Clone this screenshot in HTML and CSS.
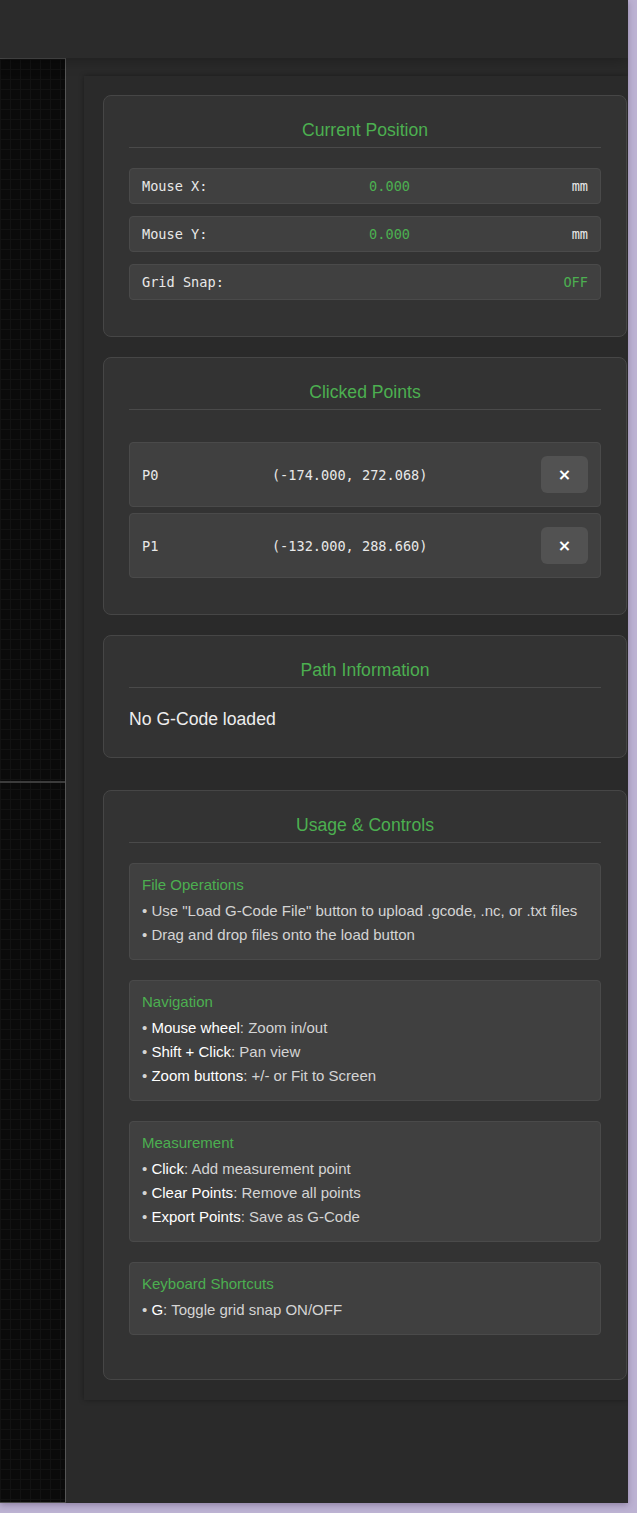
FILE: index.html
```html
<!DOCTYPE html>
<html lang="en">
<head>
<meta charset="utf-8">
<title>G-Code Viewer</title>
<link rel="stylesheet" href="styles.css">
</head>
<body>
<div class="app">
  <header class="topbar"></header>
  <div class="main">
    <div class="canvas-area">
      <div class="axis-x"></div>
    </div>
    <aside class="sidebar">
      <div class="panel">
        <section class="card">
          <h3 class="card-title">Current Position</h3>
          <div class="info-row"><span class="lbl">Mouse X:</span><span class="val">0.000</span><span class="unit">mm</span></div>
          <div class="info-row"><span class="lbl">Mouse Y:</span><span class="val">0.000</span><span class="unit">mm</span></div>
          <div class="info-row"><span class="lbl">Grid Snap:</span><span class="val">OFF</span></div>
        </section>

        <section class="card">
          <h3 class="card-title">Clicked Points</h3>
          <div class="points">
            <div class="point"><span class="pname">P0</span><span class="pcoord">(-174.000, 272.068)</span><button class="del">×</button></div>
            <div class="point"><span class="pname">P1</span><span class="pcoord">(-132.000, 288.660)</span><button class="del">×</button></div>
          </div>
        </section>

        <section class="card">
          <h3 class="card-title">Path Information</h3>
          <p class="path-info">No G-Code loaded</p>
        </section>

        <section class="card card-usage">
          <h3 class="card-title">Usage &amp; Controls</h3>
          <div class="help">
            <div class="help-title">File Operations</div>
            <div class="help-item">• Use "Load G-Code File" button to upload .gcode, .nc, or .txt files</div>
            <div class="help-item">• Drag and drop files onto the load button</div>
          </div>
          <div class="help">
            <div class="help-title">Navigation</div>
            <div class="help-item">• <b>Mouse wheel</b>: Zoom in/out</div>
            <div class="help-item">• <b>Shift + Click</b>: Pan view</div>
            <div class="help-item">• <b>Zoom buttons</b>: +/- or Fit to Screen</div>
          </div>
          <div class="help">
            <div class="help-title">Measurement</div>
            <div class="help-item">• <b>Click</b>: Add measurement point</div>
            <div class="help-item">• <b>Clear Points</b>: Remove all points</div>
            <div class="help-item">• <b>Export Points</b>: Save as G-Code</div>
          </div>
          <div class="help">
            <div class="help-title">Keyboard Shortcuts</div>
            <div class="help-item">• <b>G</b>: Toggle grid snap ON/OFF</div>
          </div>
        </section>
      </div>
    </aside>
  </div>
</div>
</body>
</html>
```

FILE: styles.css
```css
html, body {
  margin: 0;
  padding: 0;
}
body {
  background: #bcb2d2;
  font-family: "Liberation Sans", Arial, sans-serif;
  color: #e0e0e0;
  width: 637px;
  height: 1513px;
  overflow: hidden;
}
.app {
  width: 628px;
  height: 1503px;
  display: flex;
  flex-direction: column;
  background: #2a2a2a;
  overflow: hidden;
  box-shadow: 0 2px 6px rgba(60, 40, 80, 0.35);
}
.topbar {
  height: 58px;
  flex: none;
  background: #2b2b2b;
  position: relative;
  z-index: 2;
  box-shadow: 0 2px 14px rgba(0, 0, 0, 0.28);
}
.main {
  flex: 1;
  display: flex;
  min-height: 0;
}
.canvas-area {
  width: 66px;
  flex: none;
  position: relative;
  box-sizing: border-box;
  background-color: #0a0a0a;
  background-image:
    linear-gradient(to right, #121212 1px, transparent 1px),
    linear-gradient(to bottom, #121212 1px, transparent 1px);
  background-size: 10px 10px;
  border-top: 1px solid #4a4a4a;
  border-right: 1px solid #555;
  border-bottom: 1px solid #4a4a4a;
}
.axis-x {
  position: absolute;
  left: 0;
  right: 0;
  top: 722px;
  height: 2px;
  background: #3c3c3c;
}
.sidebar {
  flex: 1;
  min-width: 0;
  background: #2a2a2a;
  overflow: hidden;
}
.panel {
  margin: 18px 0 0 18px;
  padding: 19px 1px 20px 19px;
  background: #2a2a2a;
  box-shadow: 0 0 5px rgba(0, 0, 0, 0.35);
}
.card {
  background: #333333;
  border: 1px solid #464646;
  border-radius: 8px;
  padding: 24px 25px;
  margin-bottom: 20px;
}
.card:last-child {
  margin-bottom: 0;
}
.card-usage {
  margin-top: 32px;
}
.card-title {
  margin: 0 0 20px;
  padding-bottom: 7px;
  border-bottom: 1px solid #4a4a4a;
  text-align: center;
  font-size: 17.6px;
  line-height: 20px;
  font-weight: normal;
  color: #4caf50;
}
.info-row {
  display: flex;
  justify-content: space-between;
  align-items: center;
  background: #404040;
  border: 1px solid #4a4a4a;
  border-radius: 4px;
  padding: 9px 12px;
  margin-bottom: 12px;
  font-family: "DejaVu Sans Mono", "Liberation Mono", monospace;
  font-size: 13.6px;
  line-height: 16px;
  color: #e8e8e8;
}
.info-row .val {
  color: #4caf50;
}
.points {
  padding: 12px 0 12px;
}
.point {
  display: flex;
  justify-content: space-between;
  align-items: center;
  background: #404040;
  border: 1px solid #4a4a4a;
  border-radius: 4px;
  padding: 13px 12px;
  margin-bottom: 6px;
  font-family: "DejaVu Sans Mono", "Liberation Mono", monospace;
  font-size: 13.6px;
  line-height: 16px;
  color: #e8e8e8;
}
.point:last-child {
  margin-bottom: 0;
}
.del {
  width: 47px;
  height: 37px;
  display: flex;
  align-items: center;
  justify-content: center;
  padding: 0;
  border: none;
  border-radius: 6px;
  background: #525252;
  color: #ffffff;
  font-family: "DejaVu Sans", "Liberation Sans", sans-serif;
  font-size: 16px;
  font-weight: bold;
}
.path-info {
  margin: 0 0 3px;
  font-size: 17.6px;
  line-height: 22px;
  color: #eeeeee;
}
.help {
  background: #404040;
  border: 1px solid #4a4a4a;
  border-radius: 4px;
  padding: 12px;
  margin-bottom: 20px;
}
.help-title {
  color: #4caf50;
  font-size: 15px;
  line-height: 18px;
  margin-bottom: 5px;
}
.help-item {
  font-size: 15px;
  line-height: 24px;
  color: #d4d4d4;
}
.help-item b {
  font-weight: normal;
  color: #ffffff;
}
```
